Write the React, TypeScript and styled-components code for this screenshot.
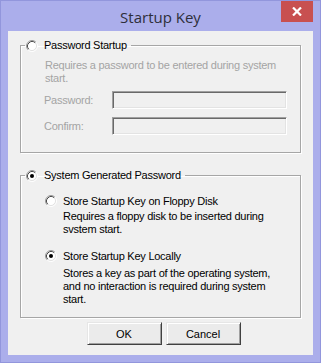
import React from 'react'
import styled, { createGlobalStyle } from 'styled-components'

const GlobalStyle = createGlobalStyle`
  html, body {
    margin: 0;
    padding: 0;
    background: #ffffff;
  }
  body {
    font-family: "Liberation Sans", Arial, sans-serif;
    font-size: 11px;
    letter-spacing: -0.25px;
  }
`

const Window = styled.div`
  width: 321px;
  height: 363px;
  box-sizing: border-box;
  background: #abaeeb;
  border: 1px solid #9296dc;
  padding: 0 7px 7px;
  display: flex;
  flex-direction: column;
`

const TitleBar = styled.div`
  height: 30px;
  display: grid;
  grid-template-columns: 1fr auto 1fr;
  align-items: center;
`

const Title = styled.div`
  grid-column: 2;
  font-family: "Open Sans", "Noto Sans", sans-serif;
  font-size: 15px;
  letter-spacing: 0;
  color: #2e2e3a;
  padding-top: 1px;
`

const CloseButton = styled.div`
  grid-column: 3;
  justify-self: end;
  align-self: start;
  width: 32px;
  height: 21px;
  background: #c85050;
  display: flex;
  align-items: center;
  justify-content: center;
`

const Client = styled.div`
  flex: 1;
  background: #f0f0f0;
  display: flex;
  flex-direction: column;
  padding: 8px 12px 7px;
`

const Group = styled.fieldset<{ $pb: number; $mt?: number }>`
  margin: ${(p) => p.$mt ?? 0}px 0 0;
  padding: 0 12px ${(p) => p.$pb}px 4px;
  border: 1px solid #a6a6a6;
  box-shadow: 1px 1px 0 #ffffff, inset 1px 1px 0 #ffffff;
  min-width: 0;
`

const Legend = styled.legend`
  padding: 0 4px 0 1px;
  line-height: 13px;
`

const RadioLabel = styled.div`
  display: flex;
  align-items: center;
  gap: 6px;
  height: 13px;
  color: #000;
`

const Content = styled.div`
  padding-left: 20px;
`

const Desc = styled.div<{ $disabled?: boolean; $mt: number; $indent?: number }>`
  margin-top: ${(p) => p.$mt}px;
  margin-left: ${(p) => p.$indent ?? 0}px;
  line-height: 13px;
  color: ${(p) => (p.$disabled ? '#a4a4a4' : '#000')};
`

const FieldRow = styled.div<{ $mt: number }>`
  display: flex;
  align-items: center;
  margin-top: ${(p) => p.$mt}px;
  margin-left: -1px;
`

const FieldLabel = styled.div`
  width: 68px;
  color: #a4a4a4;
`

const Input = styled.div`
  width: 175px;
  height: 18px;
  box-sizing: border-box;
  background: #f0f0f0;
  border-top: 1px solid #a0a0a0;
  border-left: 1px solid #a0a0a0;
  border-right: 1px solid #ffffff;
  border-bottom: 1px solid #ffffff;
  box-shadow: inset 1px 1px 0 #696969, inset -1px -1px 0 #e3e3e3;
`

const SubOption = styled.div<{ $mt: number }>`
  margin-top: ${(p) => p.$mt}px;
`

const ButtonRow = styled.div`
  display: flex;
  justify-content: center;
  gap: 4px;
  margin-top: 4px;
  padding-left: 6px;
`

const Button = styled.div`
  width: 75px;
  height: 23px;
  box-sizing: border-box;
  display: flex;
  align-items: center;
  justify-content: center;
  background: #ebebeb;
  border-top: 1px solid #e6e6e6;
  border-left: 1px solid #e6e6e6;
  border-right: 1px solid #404040;
  border-bottom: 1px solid #404040;
  box-shadow: inset 1px 1px 0 #ffffff, inset -1px -1px 0 #a0a0a0;
  color: #000;
  letter-spacing: 0;
`

const k5 = 3.89
const k4 = 3.18

const Radio: React.FC<{ checked?: boolean }> = ({ checked }) => (
  <svg width="12" height="12" viewBox="0 0 12 12">
    <circle cx="6" cy="6" r="4.5" fill="#ffffff" />
    <path d={`M${6 - k5} ${6 + k5} A5.5 5.5 0 0 1 ${6 + k5} ${6 - k5}`} stroke="#9a9a9a" fill="none" />
    <path d={`M${6 + k5} ${6 - k5} A5.5 5.5 0 0 1 ${6 - k5} ${6 + k5}`} stroke="#ffffff" fill="none" />
    <path d={`M${6 - k4} ${6 + k4} A4.5 4.5 0 0 1 ${6 + k4} ${6 - k4}`} stroke="#4a4a4a" fill="none" />
    <path d={`M${6 + k4} ${6 - k4} A4.5 4.5 0 0 1 ${6 - k4} ${6 + k4}`} stroke="#e3e3e3" fill="none" />
    {checked && <circle cx="6" cy="6" r="2" fill="#000000" />}
  </svg>
)

const App: React.FC = () => {
  return (
    <>
      <GlobalStyle />
      <Window>
        <TitleBar>
          <Title>Startup Key</Title>
          <CloseButton>
            <svg width="10" height="9" viewBox="0 0 10 9">
              <path d="M1 0.5 L9 8.5 M9 0.5 L1 8.5" stroke="#ffffff" strokeWidth="2.2" />
            </svg>
          </CloseButton>
        </TitleBar>
        <Client>
          <Group $pb={17}>
            <Legend>
              <RadioLabel>
                <Radio />
                Password Startup
              </RadioLabel>
            </Legend>
            <Content>
              <Desc $disabled $mt={7}>
                Requires a password to be entered during system start.
              </Desc>
              <FieldRow $mt={6}>
                <FieldLabel>Password:</FieldLabel>
                <Input />
              </FieldRow>
              <FieldRow $mt={8}>
                <FieldLabel>Confirm:</FieldLabel>
                <Input />
              </FieldRow>
            </Content>
          </Group>
          <Group $pb={11} $mt={16}>
            <Legend>
              <RadioLabel>
                <Radio checked />
                System Generated Password
              </RadioLabel>
            </Legend>
            <Content>
              <SubOption $mt={12}>
                <RadioLabel>
                  <Radio />
                  Store Startup Key on Floppy Disk
                </RadioLabel>
                <Desc $mt={3} $indent={18}>
                  Requires a floppy disk to be inserted during svstem start.
                </Desc>
              </SubOption>
              <SubOption $mt={13}>
                <RadioLabel>
                  <Radio checked />
                  Store Startup Key Locally
                </RadioLabel>
                <Desc $mt={5} $indent={18}>
                  Stores a key as part of the operating system, and no interaction is required during system start.
                </Desc>
              </SubOption>
            </Content>
          </Group>
          <ButtonRow>
            <Button>OK</Button>
            <Button>Cancel</Button>
          </ButtonRow>
        </Client>
      </Window>
    </>
  )
}

export default App
